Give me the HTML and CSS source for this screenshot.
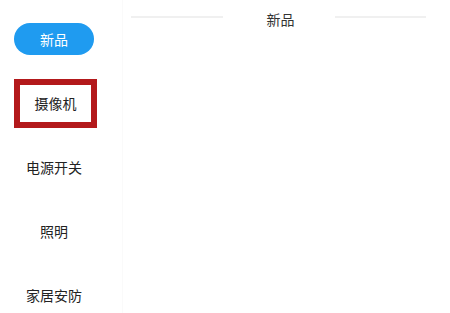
FILE: index.html
```html
<!DOCTYPE html>
<html lang="zh-CN">
  <head>
    <meta charset="UTF-8" />
    <meta name="viewport" content="width=device-width, initial-scale=1.0" />
    <title>分类</title>
    <link rel="stylesheet" href="styles.css">
  </head>
  <body>
    <div class="page">
      <div class="sidebar">
        <div class="cat"><span class="pill">新品</span></div>
        <div class="cat"><span class="marked">摄像机</span></div>
        <div class="cat">电源开关</div>
        <div class="cat">照明</div>
        <div class="cat">家居安防</div>
      </div>
      <div class="main">
        <div class="section-title">
          <span class="line"></span>
          <span class="title">新品</span>
          <span class="line"></span>
        </div>
      </div>
    </div>
  </body>
</html>
```

FILE: styles.css
```css
body {
  margin: 0;
  padding: 0;
  background: #fff;
  color: #333;
  font-family: "Noto Sans CJK SC", "Noto Sans", sans-serif;
}
.page {
  display: flex;
  width: 450px;
  height: 313px;
  overflow: hidden;
}
.sidebar {
  width: 108px;
  padding-top: 7px;
  display: flex;
  flex-direction: column;
}
.cat {
  flex-shrink: 0;
  height: 64px;
  display: flex;
  align-items: center;
  justify-content: center;
  font-size: 14px;
  color: #222;
}
.pill {
  width: 80px;
  height: 32px;
  border-radius: 16px;
  background: #1f9bf0;
  color: #fff;
  display: flex;
  align-items: center;
  justify-content: center;
}
.marked {
  width: 71px;
  height: 37px;
  border: 6px solid #b3191b;
  display: flex;
  align-items: center;
  justify-content: center;
  margin-left: 3px;
}
.main {
  flex: 1;
  border-left: 1px solid #fafafa;
  margin-left: 14px;
}
.section-title {
  height: 38px;
  display: flex;
  align-items: center;
  padding: 0 24px 0 8px;
}
.line {
  flex: 1;
  height: 2px;
  background: #f0f0f0;
  margin-top: -4px;
}
.title {
  font-size: 14px;
  color: #333;
  padding: 0 40px 0 44px;
}
```
